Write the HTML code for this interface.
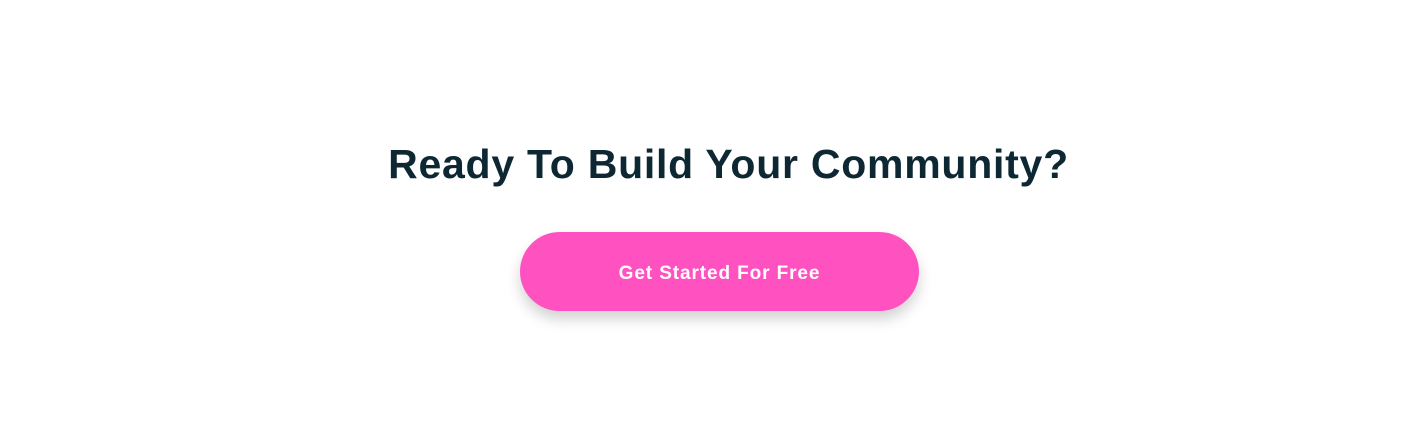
<!DOCTYPE html>
<html><head><style>
html,body{margin:0;padding:0;background:#fff;width:1424px;height:438px;overflow:hidden}
h1{position:absolute;left:0;width:1424px;top:138px;margin:0;text-align:center;font:bold 41px/52px "Liberation Sans",sans-serif;color:#0d2733;letter-spacing:0.75px;padding-left:33px;box-sizing:border-box}
.btn{position:absolute;left:520px;top:232px;width:399px;height:79px;border-radius:40px;background:#ff52c0;box-shadow:0 8px 14px rgba(0,0,0,0.18);color:#fff;font:bold 19px/83px "Liberation Sans",sans-serif;text-align:center;letter-spacing:0.9px}
</style></head><body>
<h1>Ready To Build Your Community?</h1>
<div class="btn">Get Started For Free</div>
</body></html>
